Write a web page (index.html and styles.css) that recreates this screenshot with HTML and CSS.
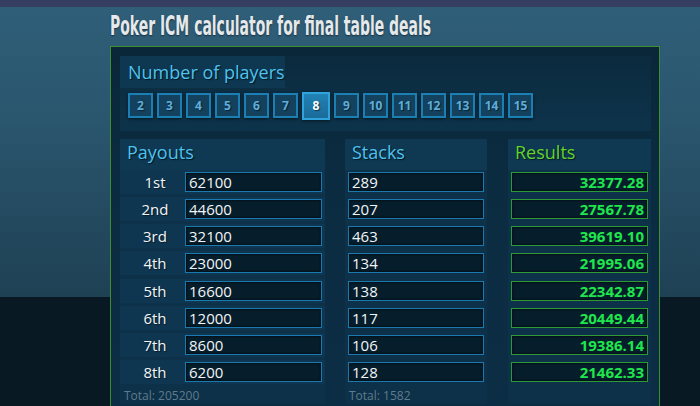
FILE: index.html
```html
<!DOCTYPE html>
<html>
<head>
<meta charset="utf-8">
<title>Poker ICM calculator</title>
<link rel="stylesheet" href="styles.css">
</head>
<body>
<div class="topbar"></div>
<main class="page">
  <h1 class="title"><span class="title-text">Poker ICM calculator for final table deals</span></h1>
  <div class="panel">
    <section class="players">
      <div class="players-tab">Number of players</div>
      <div class="btns">
        <button class="btn">2</button>
        <button class="btn">3</button>
        <button class="btn">4</button>
        <button class="btn">5</button>
        <button class="btn">6</button>
        <button class="btn">7</button>
        <button class="btn active">8</button>
        <button class="btn">9</button>
        <button class="btn">10</button>
        <button class="btn">11</button>
        <button class="btn">12</button>
        <button class="btn">13</button>
        <button class="btn">14</button>
        <button class="btn">15</button>
      </div>
    </section>
    <div class="cols">
      <div class="col col-pay">
        <div class="col-head">Payouts</div>
        <div class="rows">
          <div class="row band"><span class="place">1st</span><input class="field" value="62100"></div>
          <div class="row band"><span class="place">2nd</span><input class="field" value="44600"></div>
          <div class="row band"><span class="place">3rd</span><input class="field" value="32100"></div>
          <div class="row band"><span class="place">4th</span><input class="field" value="23000"></div>
          <div class="row band"><span class="place">5th</span><input class="field" value="16600"></div>
          <div class="row band"><span class="place">6th</span><input class="field" value="12000"></div>
          <div class="row band"><span class="place">7th</span><input class="field" value="8600"></div>
          <div class="row band"><span class="place">8th</span><input class="field" value="6200"></div>
        </div>
        <div class="total">Total: 205200</div>
      </div>
      <div class="col col-stk">
        <div class="col-head">Stacks</div>
        <div class="rows">
          <div class="row"><input class="field" value="289"></div>
          <div class="row"><input class="field" value="207"></div>
          <div class="row"><input class="field" value="463"></div>
          <div class="row"><input class="field" value="134"></div>
          <div class="row"><input class="field" value="138"></div>
          <div class="row"><input class="field" value="117"></div>
          <div class="row"><input class="field" value="106"></div>
          <div class="row"><input class="field" value="128"></div>
        </div>
        <div class="total">Total: 1582</div>
      </div>
      <div class="col col-res">
        <div class="col-head res-head">Results</div>
        <div class="rows">
          <div class="row"><input class="field res" value="32377.28" readonly></div>
          <div class="row"><input class="field res" value="27567.78" readonly></div>
          <div class="row"><input class="field res" value="39619.10" readonly></div>
          <div class="row"><input class="field res" value="21995.06" readonly></div>
          <div class="row"><input class="field res" value="22342.87" readonly></div>
          <div class="row"><input class="field res" value="20449.44" readonly></div>
          <div class="row"><input class="field res" value="19386.14" readonly></div>
          <div class="row"><input class="field res" value="21462.33" readonly></div>
        </div>
      </div>
    </div>
  </div>
</main>
</body>
</html>
```
FILE: styles.css
```css
* { box-sizing: border-box; }
html, body { margin: 0; }
body {
  width: 700px;
  height: 406px;
  overflow: hidden;
  font-family: "Open Sans", "Noto Sans", sans-serif;
  background:
    linear-gradient(to bottom, #305f79 0, #2a566e 120px, #22475c 240px, #1f4154 297px) top left / 100% 297px no-repeat,
    #081924;
}
.topbar { height: 7px; background: #363f62; }
.page { padding-left: 110px; }
.title {
  margin: 0;
  height: 39px;
  padding-top: 4px;
  font: bold 27px/30px "DejaVu Sans Condensed", "DejaVu Sans", sans-serif;
  color: #e6e9ec;
  white-space: nowrap;
}
.title-text {
  display: inline-block;
  transform: scaleX(0.575);
  transform-origin: 0 0;
  text-shadow: 0 1px 2px rgba(0, 0, 0, 0.5);
}
.panel {
  width: 550px;
  height: 380px;
  border: 1px solid #3d8f2e;
  border-bottom: none;
  background: linear-gradient(to bottom, #0a2739 0, #0b2b40 120px, #0c2e45 100%);
  padding: 9px 8px 0 9px;
}
.players {
  height: 75px;
  background: linear-gradient(to bottom, rgba(14, 52, 76, 0.2), rgba(14, 55, 80, 0.7));
}
.players-tab {
  width: 165px;
  height: 32px;
  background: #0e3751;
  color: #4fc2ee;
  font-size: 18px;
  line-height: 32px;
  padding-left: 8px;
  text-shadow: 1px 1px 1px rgba(0, 0, 0, 0.6);
}
.btns {
  display: flex;
  align-items: center;
  gap: 4px;
  height: 25px;
  margin-top: 5px;
  padding-left: 8px;
}
.btn {
  flex: none;
  width: 25px;
  height: 25px;
  padding: 0;
  border: 2px solid #1c7fb4;
  background: #14425e;
  color: #5eaedb;
  font: bold 12px/21px "Open Sans", sans-serif;
  box-shadow: 0 1px 3px rgba(0, 0, 0, 0.55);
  text-shadow: 1px 1px 1px rgba(0, 0, 0, 0.5);
}
.btn.active {
  width: 28px;
  height: 28px;
  line-height: 24px;
  background: linear-gradient(to bottom, #2182b5, #1a6b99);
  border-color: #2fa3dc;
  color: #ffffff;
}
.cols { display: flex; margin-top: 8px; }
.col { background: #0d3149; }
.col-pay { width: 205px; margin-right: 20px; }
.col-stk { width: 142px; margin-right: 21px; }
.col-res { width: 143px; }
.col-head {
  height: 31px;
  line-height: 26px;
  padding-left: 7px;
  font-size: 18px;
  color: #4fc2ee;
  background: #0f3852;
  text-shadow: 1px 1px 1px rgba(0, 0, 0, 0.6);
}
.res-head { color: #62d42c; }
.rows { display: flex; flex-direction: column; gap: 3.14px; }
.row {
  height: 24px;
  display: flex;
  align-items: center;
  padding: 0 3px;
}
.band { background: #0f3651; padding-left: 0; }
.place {
  width: 65px;
  flex: none;
  text-align: center;
  padding-left: 5px;
  color: #f2f6f8;
  font-size: 15px;
  text-shadow: 1px 1px 1px rgba(0, 0, 0, 0.5);
}
.field {
  flex: 1;
  min-width: 0;
  height: 20px;
  margin: 0;
  border: 1px solid #1a79ae;
  background: #061d2b;
  color: #f2f6f8;
  font: 15px "Open Sans", sans-serif;
  padding: 0 3px;
  box-shadow: inset 0 0 3px rgba(0, 0, 0, 0.8);
  outline: none;
}
.field.res {
  border-color: #2c9b35;
  color: #1fe64b;
  font-weight: bold;
  text-align: right;
}
.total {
  margin-top: 4px;
  padding-left: 4px;
  font-size: 12px;
  line-height: 16px;
  color: #5f7b8d;
}
```
